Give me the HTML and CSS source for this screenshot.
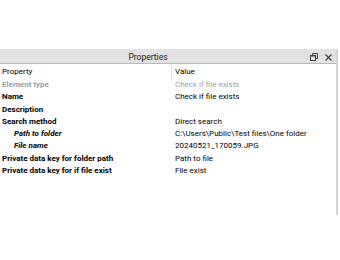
FILE: index.html
```html
<!DOCTYPE html>
<html lang="en">
<head>
    <meta charset="UTF-8">
    <title>Properties</title>
    <link rel="stylesheet" href="styles.css">
</head>
<body>
    <div class="top-space"></div>

    <div class="panel">
        <div class="title-bar">
            <span class="title">Properties</span>
            <div class="title-buttons">
                <svg class="btn-icon" width="8" height="8" viewBox="0 0 8 8">
                    <path d="M2.5 0.5h5v5h-2M2.5 0.5v2" fill="none" stroke="#444" stroke-width="1"/>
                    <rect x="0.5" y="2.5" width="5" height="5" fill="none" stroke="#444" stroke-width="1"/>
                    <path d="M0.5 3h5" stroke="#444" stroke-width="1"/>
                </svg>
                <svg class="btn-icon" width="7" height="7" viewBox="0 0 7 7">
                    <path d="M0.5 0.5l6 6M6.5 0.5l-6 6" stroke="#444" stroke-width="1.3"/>
                </svg>
            </div>
        </div>

        <div class="grid">
            <div class="row header">
                <div class="cell key">Property</div>
                <div class="cell val">Value</div>
            </div>
            <div class="row">
                <div class="cell key muted">Element type</div>
                <div class="cell val muted">Check if file exists</div>
            </div>
            <div class="row">
                <div class="cell key">Name</div>
                <div class="cell val">Check if file exists</div>
            </div>
            <div class="row">
                <div class="cell key">Description</div>
                <div class="cell val"></div>
            </div>
            <div class="row">
                <div class="cell key">Search method</div>
                <div class="cell val">Direct search</div>
            </div>
            <div class="row">
                <div class="cell key sub">Path to folder</div>
                <div class="cell val">C:\Users\Public\Test files\One folder</div>
            </div>
            <div class="row">
                <div class="cell key sub">File name</div>
                <div class="cell val">20240521_170059.JPG</div>
            </div>
            <div class="row">
                <div class="cell key">Private data key for folder path</div>
                <div class="cell val">Path to file</div>
            </div>
            <div class="row">
                <div class="cell key">Private data key for if file exist</div>
                <div class="cell val">File exist</div>
            </div>
            <div class="filler"></div>
        </div>
    </div>
</body>
</html>
```

FILE: styles.css
```css
body {
    margin: 0;
    padding: 0;
    background: #fff;
    font-family: Roboto, "Open Sans", sans-serif;
    font-size: 8px;
    color: #000;
    width: 340px;
    height: 260px;
    overflow: hidden;
}

.top-space {
    height: 49px;
}

.panel {
    border-top: 1px solid #e3e3e3;
    width: 336px;
    border-right: 2px solid #d4d4d4;
}

.title-bar {
    position: relative;
    height: 13px;
    background: #e2e2e2;
    border-bottom: 1px solid #b9b9b9;
    display: flex;
    justify-content: center;
    align-items: center;
}

.title {
    color: #222;
    font-size: 8.5px;
    margin-left: -40px;
}

.title-buttons {
    position: absolute;
    right: 4px;
    top: 3px;
    display: flex;
    gap: 7px;
    align-items: center;
}

.grid {
    display: flex;
    flex-direction: column;
}

.row {
    display: flex;
    height: 12.3px;
    line-height: 12px;
    white-space: nowrap;
}

.header {
    height: 15px;
    line-height: 16px;
}

.cell.key {
    width: 171px;
    padding-left: 2px;
    box-sizing: border-box;
    font-weight: bold;
}

.header .cell.key {
    font-weight: normal;
}

.header .cell.val {
    border-left: 1px solid #dcdcdc;
    padding-left: 3px;
}

.cell.val {
    padding-left: 4px;
}

.muted {
    color: #a0a0a0;
}

.sub {
    padding-left: 14px !important;
    font-style: italic;
}

.filler {
    height: 38px;
}
```
